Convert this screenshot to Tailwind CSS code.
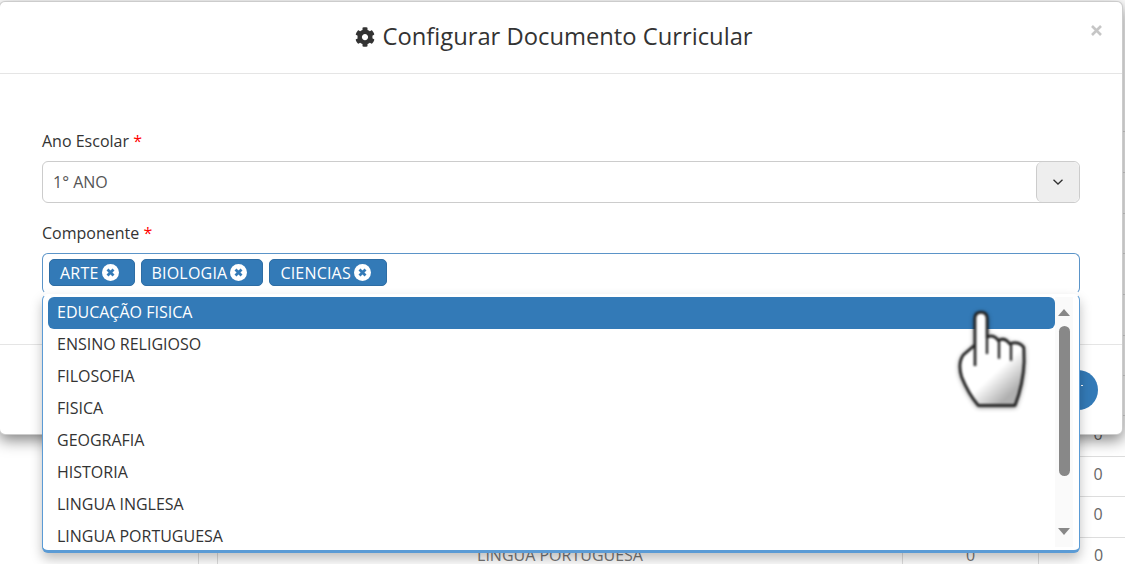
<!DOCTYPE html>
<html lang="pt">
  <head>
    <meta charset="UTF-8" />
    <title>Configurar Documento Curricular</title>
    <script src="https://cdn.jsdelivr.net/npm/@tailwindcss/browser@4"></script>
  </head>
  <body class="bg-white font-['Open_Sans',sans-serif] overflow-hidden">
    <div class="relative w-[1125px] h-[564px] overflow-hidden">
      <!-- Tabela atras do modal -->
      <div class="pt-[131px] pl-[198px] w-[1158px] text-[#777] text-[16px]">
        <div class="h-[41px] border-t border-[#ddd]"></div>
        <div class="h-[41px] border-t border-[#ddd]"></div>
        <div class="h-[40px] border-t border-[#ddd]"></div>
        <div class="h-[41px] border-t border-[#ddd]"></div>
        <div class="h-[41px] border-t border-[#ddd]"></div>
        <div class="h-[40px] border-t border-[#ddd]"></div>
        <div class="h-[40px] border-t border-[#ddd]"></div>
        <div class="h-[41px] border-t border-[#ddd] grid grid-cols-[19px_685px_136px_120px] items-center pb-[5px]">
          <span></span><span></span><span></span><span class="text-center text-[#666]">0</span>
        </div>
        <div class="h-[40px] border-t border-[#ddd] grid grid-cols-[19px_685px_136px_120px] items-center pb-[5px]">
          <span></span><span></span><span></span><span class="text-center text-[#666]">0</span>
        </div>
        <div class="h-[41px] border-t border-[#ddd] grid grid-cols-[19px_685px_136px_120px] items-center pb-[7px]">
          <span></span><span></span><span></span><span class="text-center text-[#666]">0</span>
        </div>
        <div class="h-[40px] border-t border-[#ddd] grid grid-cols-[19px_685px_136px_120px] items-center">
          <span class="h-full border-l border-[#ddd]"></span>
          <span class="h-full border-l border-[#ddd] flex items-center justify-center pb-[5px]">LINGUA PORTUGUESA</span>
          <span class="h-full border-l border-[#ddd] flex items-center justify-center pb-[5px]">0</span>
          <span class="h-full border-l border-[#ddd] flex items-center justify-center pb-[5px] text-[#666]">0</span>
        </div>
      </div>

      <!-- Modal -->
      <div class="absolute left-[-1px] top-[1px] w-[1124px] h-[434px] bg-white rounded-md border border-[#aaa]/60 shadow-[0_5px_15px_rgba(0,0,0,0.5)]">
        <div class="relative h-[72px] border-b border-[#e5e5e5] flex items-center justify-center text-[23.75px] text-[#333] pb-[2px] pr-[14px]">
          <svg class="w-5 h-5 mr-[7px] fill-[#333]" viewBox="0 0 512 512"><path d="M487.4 315.7l-42.6-24.6c4.3-23.2 4.3-47 0-70.2l42.6-24.6c4.9-2.8 7.1-8.6 5.5-14-11.1-35.6-30-67.8-54.7-94.6-3.8-4.1-10-5.1-14.8-2.3L380.8 110c-17.9-15.4-38.5-27.3-60.8-35.1V25.8c0-5.6-3.9-10.5-9.4-11.7-36.7-8.2-74.3-7.8-109.2 0-5.5 1.2-9.4 6.1-9.4 11.7V75c-22.2 7.9-42.8 19.8-60.8 35.1L88.7 85.5c-4.9-2.8-11-1.9-14.8 2.3-24.7 26.7-43.6 58.9-54.7 94.6-1.7 5.4.6 11.2 5.5 14L67.3 221c-4.3 23.2-4.3 47 0 70.2l-42.6 24.6c-4.9 2.8-7.1 8.6-5.5 14 11.1 35.6 30 67.8 54.7 94.6 3.8 4.1 10 5.1 14.8 2.3l42.6-24.6c17.9 15.4 38.5 27.3 60.8 35.1v49.2c0 5.6 3.9 10.5 9.4 11.7 36.7 8.2 74.3 7.8 109.2 0 5.5-1.2 9.4-6.1 9.4-11.7v-49.2c22.2-7.9 42.8-19.8 60.8-35.1l42.6 24.6c4.9 2.8 11 1.9 14.8-2.3 24.7-26.7 43.6-58.9 54.7-94.6 1.5-5.5-.7-11.3-5.6-14.1zM256 336c-44.1 0-80-35.9-80-80s35.9-80 80-80 80 35.9 80 80-35.9 80-80 80z"/></svg>
          <span>Configurar Documento Curricular</span>
          <svg class="absolute right-[20px] top-[23px] w-[11px] h-[11px] stroke-[#c6c6c6]" viewBox="0 0 11 11" fill="none" stroke-width="2.6"><path d="M1 1l9 9M10 1l-9 9"/></svg>
        </div>

        <div class="h-[271px] border-b border-[#e5e5e5] pt-[56px] pl-[42px]">
          <label class="block h-[22px] leading-[22px] text-[16px] text-[#333] mb-[9px]">Ano Escolar <span class="text-[#f00]">*</span></label>
          <div class="flex h-[42px] w-[1038px] border border-[#ccc] rounded-md text-[16px] text-[#555] items-center justify-between overflow-hidden">
            <span class="pl-[10px]">1° ANO</span>
            <span class="w-[43px] h-full bg-[#eee] border-l border-[#ccc] rounded-md flex items-center justify-center">
              <svg class="w-[10px] h-[6px] stroke-[#333]" viewBox="0 0 10 6" fill="none" stroke-width="1.3"><path d="M.5.7L5 5l4.500-4.300"/></svg>
            </span>
          </div>

          <label class="block h-[22px] leading-[22px] text-[16px] text-[#333] mt-[19px] mb-[9px]">Componente <span class="text-[#f00]">*</span></label>
          <div class="relative w-[1038px]">
            <div class="h-[41px] border border-[#5b94c8] border-b-white rounded-md flex items-start gap-[6px] pl-[6px] pt-[5px]">
              <span class="h-[27px] bg-[#337ab7] border border-[#2e6da4] rounded-[5px] flex items-center pl-[10px] pr-[15px] gap-[3px] text-[16px] tracking-[0.2px] text-white">
                ARTE
                <svg class="w-[17px] h-[17px]" viewBox="0 0 17 17"><circle cx="8.500" cy="8.500" r="8.500" fill="#fff"/><path d="M5.500 5.500l6 6M11.500 5.500l-6 6" stroke="#337ab7" stroke-width="2.800"/></svg>
              </span>
              <span class="h-[27px] bg-[#337ab7] border border-[#2e6da4] rounded-[5px] flex items-center pl-[10px] pr-[15px] gap-[3px] text-[16px] tracking-[0.2px] text-white">
                BIOLOGIA
                <svg class="w-[17px] h-[17px]" viewBox="0 0 17 17"><circle cx="8.500" cy="8.500" r="8.500" fill="#fff"/><path d="M5.500 5.500l6 6M11.500 5.500l-6 6" stroke="#337ab7" stroke-width="2.800"/></svg>
              </span>
              <span class="h-[27px] bg-[#337ab7] border border-[#2e6da4] rounded-[5px] flex items-center pl-[10px] pr-[15px] gap-[3px] text-[16px] tracking-[0.2px] text-white">
                CIENCIAS
                <svg class="w-[17px] h-[17px]" viewBox="0 0 17 17"><circle cx="8.500" cy="8.500" r="8.500" fill="#fff"/><path d="M5.500 5.500l6 6M11.500 5.500l-6 6" stroke="#337ab7" stroke-width="2.800"/></svg>
              </span>
            </div>

            <!-- Lista suspensa -->
            <div class="absolute z-10 left-0 top-[41px] w-[1038px] h-[259px] bg-white border border-[#5b9bd5] border-t-white border-b-[3px] rounded-md shadow-[0_6px_12px_rgba(0,0,0,0.25)] flex pl-[5px] pr-[6px] pt-[2px] text-[16px] text-[#333]">
              <ul class="flex-1 h-[250px] overflow-hidden">
                <li class="h-8 leading-[30px] pl-[9px] bg-[#337ab7] text-white rounded-md">EDUCAÇÃO FISICA</li>
                <li class="h-8 leading-[30px] pl-[9px]">ENSINO RELIGIOSO</li>
                <li class="h-8 leading-[30px] pl-[9px]">FILOSOFIA</li>
                <li class="h-8 leading-[30px] pl-[9px]">FISICA</li>
                <li class="h-8 leading-[30px] pl-[9px]">GEOGRAFIA</li>
                <li class="h-8 leading-[30px] pl-[9px]">HISTORIA</li>
                <li class="h-8 leading-[30px] pl-[9px]">LINGUA INGLESA</li>
                <li class="h-8 leading-[30px] pl-[9px]">LINGUA PORTUGUESA</li>
              </ul>
              <div class="w-[18px] h-[250px] bg-[#fafafa] flex flex-col items-center pt-[12px]">
                <span class="w-0 h-0 border-x-[6.500px] border-x-transparent border-b-[7px] border-b-[#888]"></span>
                <span class="w-[11px] h-[150px] mt-[10px] bg-[#888] rounded-full"></span>
                <span class="w-0 h-0 mt-[52px] border-x-[6.500px] border-x-transparent border-t-[7px] border-t-[#888]"></span>
              </div>
            </div>
          </div>
        </div>

        <div class="h-[89px] flex items-center justify-end pr-[24px]">
          <span class="w-10 h-10 rounded-full bg-[#337ab7] flex items-center justify-center">
            <span class="w-[2px] h-px bg-white mt-[-8px] ml-[7px]"></span>
          </span>
        </div>
      </div>

      <!-- Cursor de mao -->
      <svg class="absolute z-20 left-[955px] top-[305px] w-[80px] h-[110px] blur-[0.8px] drop-shadow-[0_1px_2px_rgba(0,0,0,0.45)]" viewBox="90 75 240 330" fill="none">
        <defs>
          <linearGradient id="mao" x1="0.25" y1="0.45" x2="0.6" y2="1">
            <stop offset="0.5" stop-color="#fff" />
            <stop offset="1" stop-color="#b0b0b0" />
          </linearGradient>
        </defs>
        <path fill="url(#mao)" stroke="#222" stroke-width="8" stroke-linejoin="round" d="M150 258L150 115Q150 97 168 97Q186 97 186 115L186 172Q205 162 220 182Q238 170 254 192Q280 182 296 202L297 245Q295 310 270 376L160 376Q130 340 110 290Q98 250 115 225L150 195"/>
        <path stroke="#222" stroke-width="7" d="M186 170L186 222M222 182L222 236M258 194L258 242"/>
      </svg>
    </div>
  </body>
</html>
